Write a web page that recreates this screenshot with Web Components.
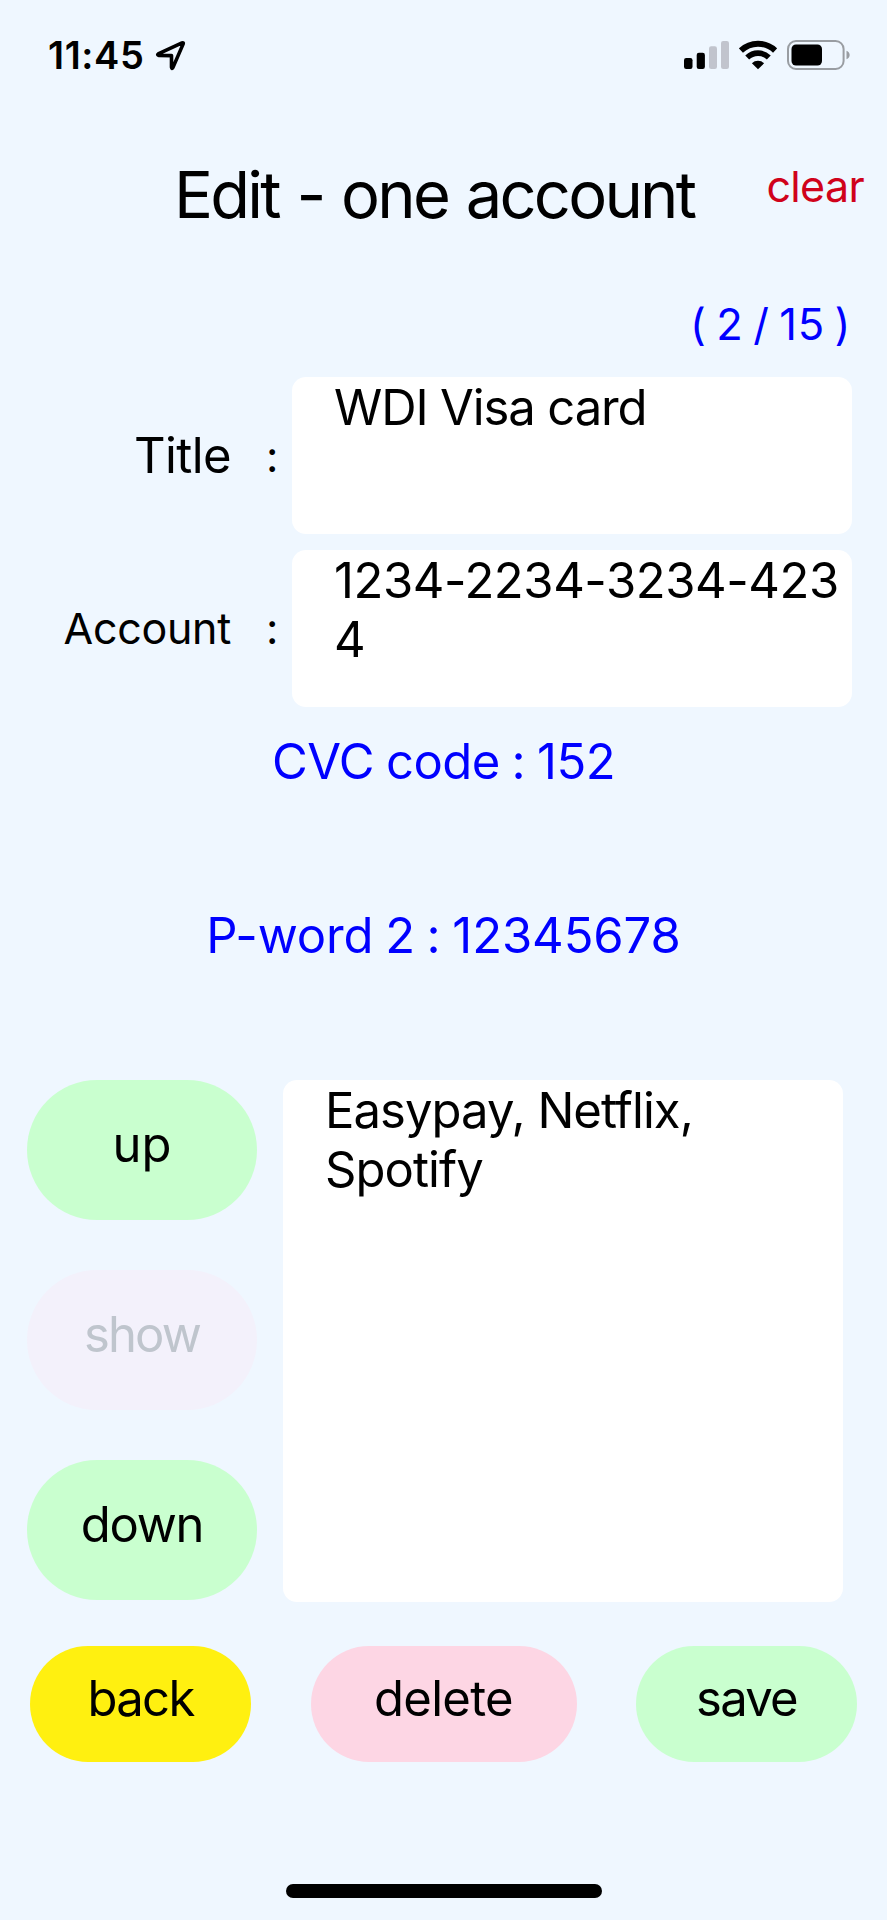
<!DOCTYPE html>
<html lang="en">
<head>
<meta charset="utf-8">
<meta name="viewport" content="width=device-width">
<title>Edit - one account</title>
<style>
    html, body { margin: 0; padding: 0; }
    body { background: #eff7ff; color: #000; font-family: Inter, "Liberation Sans", sans-serif; }
</style>
</head>
<body>
<account-screen></account-screen>

<script>
(function () {
    "use strict";

    // Attach an open shadow root holding the element's styles and markup.
    function shadow(el, css, html) {
        el.attachShadow({ mode: 'open' }).innerHTML =
            `<style>* { box-sizing: border-box; } ${css}</style>${html}`;
    }

    class StatusBar extends HTMLElement {
        connectedCallback() {
            shadow(this, `
                :host { display: flex; height: 155px; padding: 32px 37px 0 48px; align-items: flex-start; }
                .time { font-size: 38px; line-height: 46px; font-weight: 600; letter-spacing: 0.6px; }
                svg { display: block; flex: none; }
                .location { margin: 8px 0 0 11px; }
                .icons { display: flex; gap: 10px; margin: 8px 0 0 auto; }
            `, `
                <span class="time">11:45</span>
                <svg class="location" width="33" height="32" viewBox="0 0 33 32">
                    <path d="M3.2 13.9 27 2.9q1.8-.6 1.2 1L17.9 27.6q-1.1 1.8-1.4-.3V15.6L4 15.4Q1.8 14.8 3.2 13.9Z"
                        fill="none" stroke="#000" stroke-width="3.6" stroke-linejoin="round"/>
                </svg>
                <div class="icons">
                    <svg width="45" height="30" viewBox="0 0 45 30">
                        <rect x="0" y="18" width="8.5" height="11" rx="2.2"/>
                        <rect x="12.7" y="12.8" width="8.2" height="16.2" rx="2.2"/>
                        <rect x="25" y="6.3" width="8" height="22.7" rx="2.2" fill="#c1c4cd"/>
                        <rect x="37" y="1" width="8" height="28" rx="2.2" fill="#c1c4cd"/>
                    </svg>
                    <svg width="38" height="30" viewBox="0 0 38 30" fill="none" stroke="#000">
                        <path d="M1.9 10.6a24.8 24.8 0 0 1 34.2 0" stroke-width="6"/>
                        <path d="M8.2 17.5a15.6 15.6 0 0 1 21.6 0" stroke-width="5.6"/>
                        <path d="M12.9 23.3a8.8 8.8 0 0 1 12.2 0L19 29.3Z" fill="#000" stroke="none"/>
                    </svg>
                    <svg width="63" height="30" viewBox="0 0 63 30">
                        <rect x="1" y="1" width="55.6" height="28" rx="8" fill="none" stroke="#999da2" stroke-width="2"/>
                        <rect x="4.5" y="4.5" width="30.5" height="21" rx="4.5"/>
                        <path d="M59.5 10.7c4.2 1.4 4.2 7.2 0 8.6Z" fill="#999da2"/>
                    </svg>
                </div>`);
        }
    }

    class ScreenHeader extends HTMLElement {
        connectedCallback() {
            shadow(this, `
                :host { display: flex; height: 143px; padding: 0 23px 0 174px; justify-content: space-between; }
                h1 { margin: 0; font-size: 65px; line-height: 80px; font-weight: 400; letter-spacing: -2.75px;
                    word-spacing: 2px; }
                ::slotted(a) { margin-top: 5px; color: #d0021b; font-size: 43px; line-height: 52px;
                    letter-spacing: -0.65px; text-decoration: none; }
            `, `<h1><slot></slot></h1><slot name="action"></slot>`);
        }
    }

    // A right-aligned label, a colon and a white text box.
    class FormRow extends HTMLElement {
        connectedCallback() {
            shadow(this, `
                :host { display: grid; grid-template-columns: 231px 12px 560px; column-gap: 35px;
                    height: 157px; align-items: center; }
                .label { text-align: right; font-size: var(--label-size, 49px);
                    letter-spacing: var(--label-tracking, -0.6px); }
                .label, .colon { padding-bottom: var(--label-lift, 0); }
                .colon { font-size: 43px; }
                text-box { margin-left: -21px; width: 560px; height: 157px; }
            `, `
                <span class="label"></span><span class="colon">:</span>
                <text-box><slot></slot></text-box>`);
            this.shadowRoot.querySelector('.label').textContent = this.getAttribute('label');
        }
    }

    class TextBox extends HTMLElement {
        connectedCallback() {
            shadow(this, `
                :host { display: block; padding: 1px 8px 0 42px; border-radius: 14px; background: #fff;
                    font-size: 49px; line-height: 59px; letter-spacing: var(--tracking, -0.44px);
                    word-break: break-all; }
            `, `<slot></slot>`);
        }
    }

    class InfoLine extends HTMLElement {
        connectedCallback() {
            shadow(this, `
                :host { display: block; height: 174px; text-align: center; color: #00f;
                    font-size: 49px; line-height: 60px; letter-spacing: var(--tracking, 0);
                    word-spacing: var(--word-gap, 0); }
            `, `<slot></slot>`);
        }
    }

    class PillButton extends HTMLElement {
        connectedCallback() {
            shadow(this, `
                :host { display: block; width: 230px; height: 140px; }
                button { display: flex; width: 100%; height: 100%; padding: 0 0 12px; border: 0;
                    align-items: center; justify-content: center; color: #000; background: #c9ffcf;
                    border-radius: var(--radius, 70px) / 50%; font: inherit; font-size: 49px;
                    letter-spacing: var(--tracking, 0); cursor: pointer; }
                :host([kind="back"]) button { background: #fff010; }
                :host([kind="delete"]) button { background: #fdd6e4; }
                :host([disabled]) button { background: #f3f1fb; color: #bfc5cd; cursor: default; }
            `, `<button type="button"><slot></slot></button>`);
            this.shadowRoot.querySelector('button').disabled = this.hasAttribute('disabled');
        }
    }

    class AccountScreen extends HTMLElement {
        connectedCallback() {
            shadow(this, `
                :host { display: flex; flex-direction: column; width: 887px; height: 1920px; overflow: hidden; }
                .count { height: 79px; padding-right: 36px; text-align: right; color: #00f;
                    font-size: 43.5px; line-height: 52px; letter-spacing: 0.6px; word-spacing: -3px; }
                .fields { display: grid; row-gap: 16px; margin-bottom: 25px; }
                .notes { display: flex; height: 522px; margin-bottom: 44px; padding-left: 27px; gap: 26px; }
                .moves { display: flex; flex-direction: column; justify-content: space-between; height: 520px; }
                .notes text-box { width: 560px; height: 522px; padding-right: 100px; word-break: normal; }
                .actions { display: flex; justify-content: space-between; padding: 0 30px; }
                .actions pill-button { --radius: 58px; width: 221px; height: 116px; }
                .actions pill-button[kind="delete"] { width: 266px; }
                .home { width: 316px; height: 14px; margin: auto auto 22px 286px; border-radius: 7px; background: #000; }
            `, `
                <status-bar></status-bar>
                <screen-header>Edit - one account<a slot="action" href="#">clear</a></screen-header>
                <div class="count">( 2 / 15 )</div>
                <div class="fields">
                    <form-row label="Title" style="--tracking: -1.12px">WDI Visa card</form-row>
                    <form-row label="Account"
                        style="--label-size: 43px; --label-tracking: -0.3px; --label-lift: 2px">1234-2234-3234-4234</form-row>
                </div>
                <info-line style="--tracking: -0.5px; --word-gap: -1.5px">CVC code : 152</info-line>
                <info-line style="--tracking: -0.1px; --word-gap: -2px">P-word 2 : 12345678</info-line>
                <div class="notes">
                    <div class="moves">
                        <pill-button>up</pill-button>
                        <pill-button disabled style="--tracking: -1.9px">show</pill-button>
                        <pill-button style="--tracking: -1.2px">down</pill-button>
                    </div>
                    <text-box style="--tracking: -0.95px">Easypay, Netflix, Spotify</text-box>
                </div>
                <div class="actions">
                    <pill-button kind="back" style="--tracking: -1.66px">back</pill-button>
                    <pill-button kind="delete" style="--tracking: -0.71px">delete</pill-button>
                    <pill-button style="--tracking: -1.75px">save</pill-button>
                </div>
                <div class="home"></div>`);
        }
    }

    customElements.define('status-bar', StatusBar);
    customElements.define('screen-header', ScreenHeader);
    customElements.define('text-box', TextBox);
    customElements.define('form-row', FormRow);
    customElements.define('info-line', InfoLine);
    customElements.define('pill-button', PillButton);
    customElements.define('account-screen', AccountScreen);
})();
</script>
</body>
</html>
